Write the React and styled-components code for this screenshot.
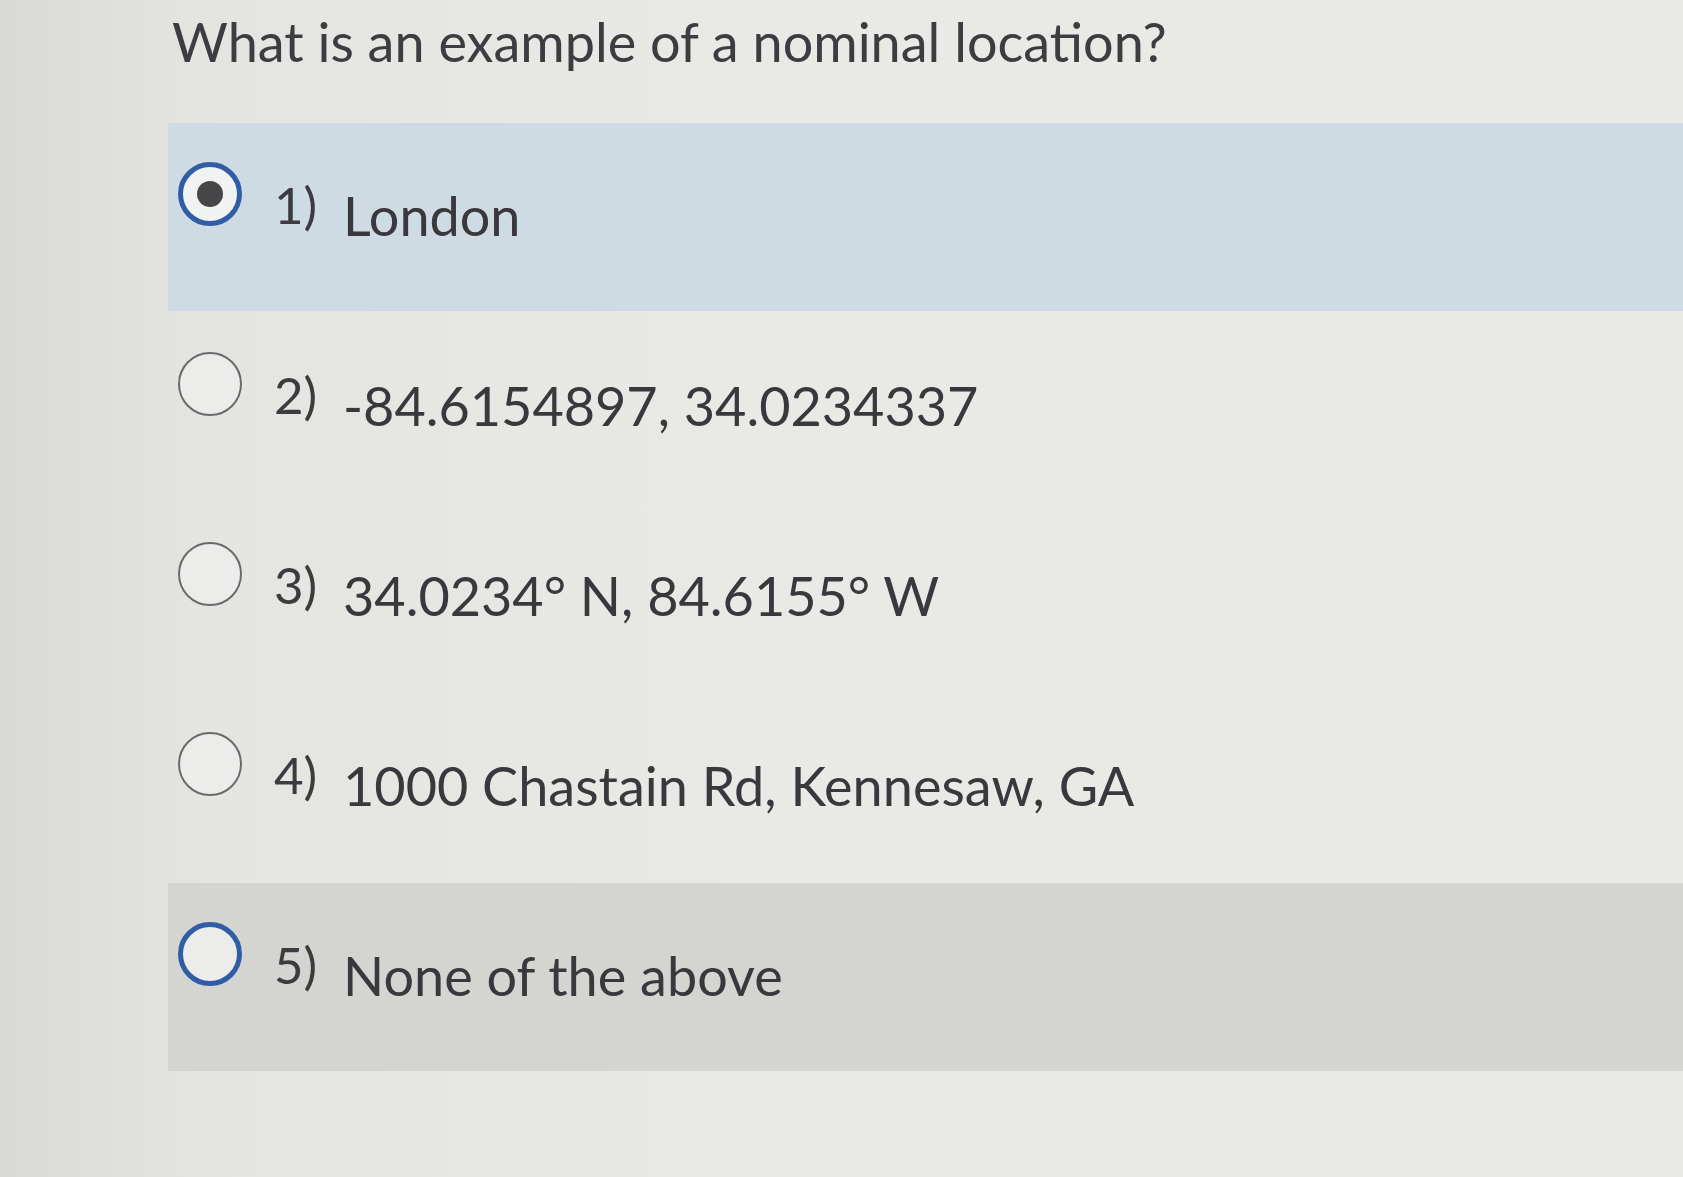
import React from "react";
import styled, { createGlobalStyle } from "styled-components";

const GlobalStyle = createGlobalStyle`
  html, body {
    margin: 0;
    padding: 0;
    height: 100%;
  }
  body {
    background: linear-gradient(90deg, #d9d9d6 0%, #e4e4e0 12%, #e9e9e5 45%, #e9e9e5 100%);
    font-family: Lato, "Open Sans", sans-serif;
    color: #3a3a3f;
  }
`;

const Page = styled.div`
  min-height: 1177px;
  padding: 8px 0 0 168px;
  box-sizing: border-box;
`;

const Question = styled.h1`
  margin: 0 0 47px 4px;
  font-size: 54px;
  font-weight: 400;
  line-height: 68px;
  color: #3c3c41;
`;

const OptionList = styled.div`
  display: flex;
  flex-direction: column;
  gap: 2px;
`;

const Option = styled.label`
  display: flex;
  align-items: flex-start;
  height: 188px;
  padding: 0 0 0 10px;
  box-sizing: border-box;
  background: ${({ $tone }) =>
    $tone === "selected" ? "#cfdbe2" : $tone === "focus" ? "#d4d4d0" : "transparent"};
`;

const Radio = styled.span`
  flex: none;
  width: 64px;
  height: 64px;
  margin-top: 39px;
  border-radius: 50%;
  box-sizing: border-box;
  border: ${({ $active }) => ($active ? "5px solid #2f5ea6" : "2.5px solid #6a6a6c")};
  background: ${({ $selected }) => ($selected ? "#f1f2f2" : "#ececea")};
  display: flex;
  align-items: center;
  justify-content: center;
`;

const Dot = styled.span`
  width: 26px;
  height: 26px;
  border-radius: 50%;
  background: #464649;
`;

const Number = styled.span`
  flex: none;
  width: 69px;
  margin: 57px 0 0 32px;
  font-size: 51px;
  line-height: 50px;
  color: #3c3c40;
`;

const Text = styled.span`
  margin-top: 66px;
  font-size: 54px;
  line-height: 54px;
  color: #38383d;
`;

const options = [
  { n: 1, text: "London", tone: "selected", selected: true, active: true },
  { n: 2, text: "-84.6154897, 34.0234337" },
  { n: 3, text: "34.0234° N, 84.6155° W" },
  { n: 4, text: "1000 Chastain Rd, Kennesaw, GA" },
  { n: 5, text: "None of the above", tone: "focus", active: true },
];

export default function App() {
  return (
    <Page>
      <GlobalStyle />
      <Question>What is an example of a nominal location?</Question>
      <OptionList>
        {options.map((o) => (
          <Option key={o.n} $tone={o.tone}>
            <Radio $active={o.active} $selected={o.selected}>
              {o.selected && <Dot />}
            </Radio>
            <Number>{o.n})</Number>
            <Text>{o.text}</Text>
          </Option>
        ))}
      </OptionList>
    </Page>
  );
}
